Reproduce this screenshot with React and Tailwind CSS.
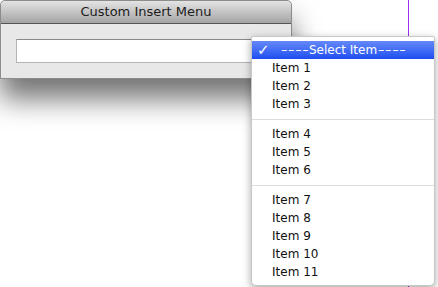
const groups = [
  ["Item 1", "Item 2", "Item 3"],
  ["Item 4", "Item 5", "Item 6"],
  ["Item 7", "Item 8", "Item 9", "Item 10", "Item 11"],
];

const InsertWindow = () => (
  <div className="w-[292px] rounded-t-[5px] border border-[#8c8c8c] bg-[#e8e8e8] shadow-[0_20px_28px_rgba(0,0,0,0.55)]">
    <div className="flex h-[23px] items-center justify-center rounded-t-[5px] border-b border-[#555] bg-gradient-to-b from-[#e4e4e4] to-[#a4a4a4] text-[13px] text-[#1c1c1c]">
      Custom Insert Menu
    </div>
    <div className="px-[15px] pt-[15px] pb-[15px]">
      <div className="h-[24px] border border-[#b4b4b4] border-t-[#8a8a8a] bg-white" />
    </div>
  </div>
);

// the dashes are drawn wider than DejaVu's hyphen, so stretch them a bit
const Dashes = () => (
  <span className="inline-block w-[28px]">
    <span className="inline-block origin-left scale-x-[1.5] tracking-[0.4px]">----</span>
  </span>
);

const SelectMenu = () => (
  <div className="w-[184px] rounded-b-[5px] rounded-t-[2px] border border-[#c8c8c8] bg-white py-[4px] text-[12px] text-[#111] shadow-[0_3px_8px_rgba(0,0,0,0.35)]">
    <div className="flex h-[18px] items-center bg-gradient-to-b from-[#6688f8] to-[#1e4cf0] text-white">
      <span className="w-[29px] pl-[5px] text-[15px] leading-none">✓</span>
      <Dashes />
      <span className="pr-[1px]">Select Item</span>
      <Dashes />
    </div>
    {groups.map((items, gi) => (
      <div key={gi}>
        {gi > 0 && (
          <div className="flex h-[12px] items-center">
            <div className="h-px w-full bg-[#dcdcdc]" />
          </div>
        )}
        {items.map((label) => (
          <div key={label} className="flex h-[18px] items-center pl-[20px]">
            {label}
          </div>
        ))}
      </div>
    ))}
  </div>
);

export default function App() {
  return (
    <div
      className="relative h-[287px] w-[438px] overflow-hidden bg-white"
      style={{ fontFamily: '"DejaVu Sans", "Noto Sans", sans-serif' }}
    >
      <div className="absolute left-[408px] top-0 h-full w-px bg-[#9b30ee]" />
      <div className="relative">
        <InsertWindow />
      </div>
      <div className="absolute left-[251px] top-[36px]">
        <SelectMenu />
      </div>
    </div>
  );
}
